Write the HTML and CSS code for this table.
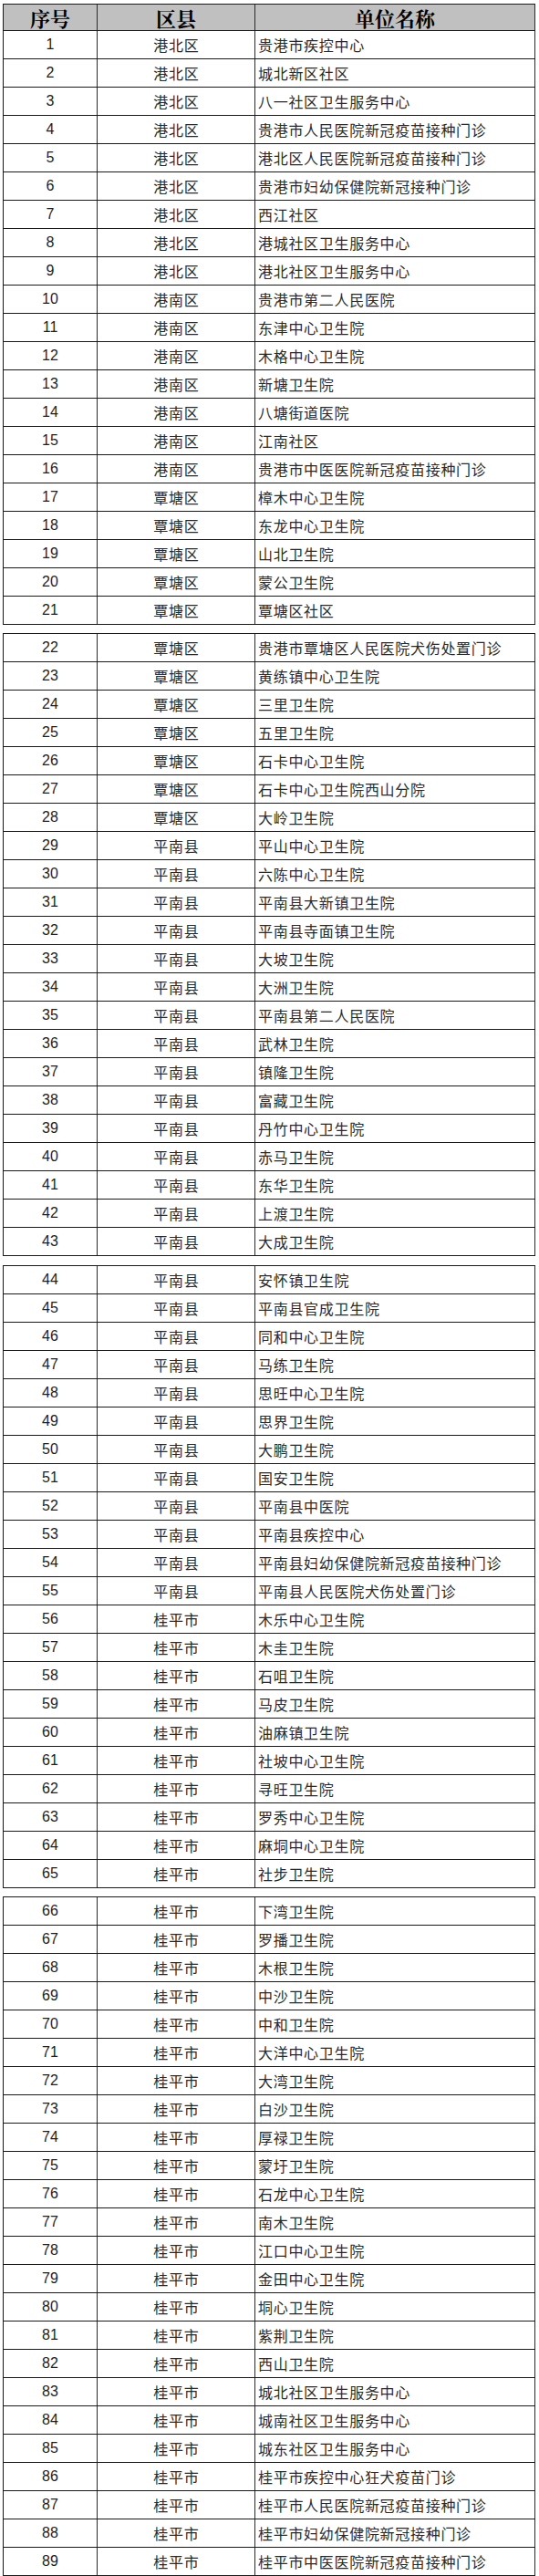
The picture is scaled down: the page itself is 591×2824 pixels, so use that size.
FILE: index.html
```html
<!DOCTYPE html>
<html lang="zh-CN">
<head>
<meta charset="utf-8">
<title>接种单位名单</title>
<link rel="stylesheet" href="styles.css">
</head>
<body>
<div class="page">
  <div class="seg">
    <div class="row head"><span class="no">序号</span><span class="area">区县</span><span class="name">单位名称</span></div>
    <div class="row"><span class="no">1</span><span class="area">港北区</span><span class="name">贵港市疾控中心</span></div>
    <div class="row"><span class="no">2</span><span class="area">港北区</span><span class="name">城北新区社区</span></div>
    <div class="row"><span class="no">3</span><span class="area">港北区</span><span class="name">八一社区卫生服务中心</span></div>
    <div class="row"><span class="no">4</span><span class="area">港北区</span><span class="name">贵港市人民医院新冠疫苗接种门诊</span></div>
    <div class="row"><span class="no">5</span><span class="area">港北区</span><span class="name">港北区人民医院新冠疫苗接种门诊</span></div>
    <div class="row"><span class="no">6</span><span class="area">港北区</span><span class="name">贵港市妇幼保健院新冠接种门诊</span></div>
    <div class="row"><span class="no">7</span><span class="area">港北区</span><span class="name">西江社区</span></div>
    <div class="row"><span class="no">8</span><span class="area">港北区</span><span class="name">港城社区卫生服务中心</span></div>
    <div class="row"><span class="no">9</span><span class="area">港北区</span><span class="name">港北社区卫生服务中心</span></div>
    <div class="row"><span class="no">10</span><span class="area">港南区</span><span class="name">贵港市第二人民医院</span></div>
    <div class="row"><span class="no">11</span><span class="area">港南区</span><span class="name">东津中心卫生院</span></div>
    <div class="row"><span class="no">12</span><span class="area">港南区</span><span class="name">木格中心卫生院</span></div>
    <div class="row"><span class="no">13</span><span class="area">港南区</span><span class="name">新塘卫生院</span></div>
    <div class="row"><span class="no">14</span><span class="area">港南区</span><span class="name">八塘街道医院</span></div>
    <div class="row"><span class="no">15</span><span class="area">港南区</span><span class="name">江南社区</span></div>
    <div class="row"><span class="no">16</span><span class="area">港南区</span><span class="name">贵港市中医医院新冠疫苗接种门诊</span></div>
    <div class="row"><span class="no">17</span><span class="area">覃塘区</span><span class="name">樟木中心卫生院</span></div>
    <div class="row"><span class="no">18</span><span class="area">覃塘区</span><span class="name">东龙中心卫生院</span></div>
    <div class="row"><span class="no">19</span><span class="area">覃塘区</span><span class="name">山北卫生院</span></div>
    <div class="row"><span class="no">20</span><span class="area">覃塘区</span><span class="name">蒙公卫生院</span></div>
    <div class="row"><span class="no">21</span><span class="area">覃塘区</span><span class="name">覃塘区社区</span></div>
  </div>
  <div class="seg seg-2">
    <div class="row"><span class="no">22</span><span class="area">覃塘区</span><span class="name">贵港市覃塘区人民医院犬伤处置门诊</span></div>
    <div class="row"><span class="no">23</span><span class="area">覃塘区</span><span class="name">黄练镇中心卫生院</span></div>
    <div class="row"><span class="no">24</span><span class="area">覃塘区</span><span class="name">三里卫生院</span></div>
    <div class="row"><span class="no">25</span><span class="area">覃塘区</span><span class="name">五里卫生院</span></div>
    <div class="row"><span class="no">26</span><span class="area">覃塘区</span><span class="name">石卡中心卫生院</span></div>
    <div class="row"><span class="no">27</span><span class="area">覃塘区</span><span class="name">石卡中心卫生院西山分院</span></div>
    <div class="row"><span class="no">28</span><span class="area">覃塘区</span><span class="name">大岭卫生院</span></div>
    <div class="row"><span class="no">29</span><span class="area">平南县</span><span class="name">平山中心卫生院</span></div>
    <div class="row"><span class="no">30</span><span class="area">平南县</span><span class="name">六陈中心卫生院</span></div>
    <div class="row"><span class="no">31</span><span class="area">平南县</span><span class="name">平南县大新镇卫生院</span></div>
    <div class="row"><span class="no">32</span><span class="area">平南县</span><span class="name">平南县寺面镇卫生院</span></div>
    <div class="row"><span class="no">33</span><span class="area">平南县</span><span class="name">大坡卫生院</span></div>
    <div class="row"><span class="no">34</span><span class="area">平南县</span><span class="name">大洲卫生院</span></div>
    <div class="row"><span class="no">35</span><span class="area">平南县</span><span class="name">平南县第二人民医院</span></div>
    <div class="row"><span class="no">36</span><span class="area">平南县</span><span class="name">武林卫生院</span></div>
    <div class="row"><span class="no">37</span><span class="area">平南县</span><span class="name">镇隆卫生院</span></div>
    <div class="row"><span class="no">38</span><span class="area">平南县</span><span class="name">富藏卫生院</span></div>
    <div class="row"><span class="no">39</span><span class="area">平南县</span><span class="name">丹竹中心卫生院</span></div>
    <div class="row"><span class="no">40</span><span class="area">平南县</span><span class="name">赤马卫生院</span></div>
    <div class="row"><span class="no">41</span><span class="area">平南县</span><span class="name">东华卫生院</span></div>
    <div class="row"><span class="no">42</span><span class="area">平南县</span><span class="name">上渡卫生院</span></div>
    <div class="row"><span class="no">43</span><span class="area">平南县</span><span class="name">大成卫生院</span></div>
  </div>
  <div class="seg seg-3">
    <div class="row"><span class="no">44</span><span class="area">平南县</span><span class="name">安怀镇卫生院</span></div>
    <div class="row"><span class="no">45</span><span class="area">平南县</span><span class="name">平南县官成卫生院</span></div>
    <div class="row"><span class="no">46</span><span class="area">平南县</span><span class="name">同和中心卫生院</span></div>
    <div class="row"><span class="no">47</span><span class="area">平南县</span><span class="name">马练卫生院</span></div>
    <div class="row"><span class="no">48</span><span class="area">平南县</span><span class="name">思旺中心卫生院</span></div>
    <div class="row"><span class="no">49</span><span class="area">平南县</span><span class="name">思界卫生院</span></div>
    <div class="row"><span class="no">50</span><span class="area">平南县</span><span class="name">大鹏卫生院</span></div>
    <div class="row"><span class="no">51</span><span class="area">平南县</span><span class="name">国安卫生院</span></div>
    <div class="row"><span class="no">52</span><span class="area">平南县</span><span class="name">平南县中医院</span></div>
    <div class="row"><span class="no">53</span><span class="area">平南县</span><span class="name">平南县疾控中心</span></div>
    <div class="row"><span class="no">54</span><span class="area">平南县</span><span class="name">平南县妇幼保健院新冠疫苗接种门诊</span></div>
    <div class="row"><span class="no">55</span><span class="area">平南县</span><span class="name">平南县人民医院犬伤处置门诊</span></div>
    <div class="row"><span class="no">56</span><span class="area">桂平市</span><span class="name">木乐中心卫生院</span></div>
    <div class="row"><span class="no">57</span><span class="area">桂平市</span><span class="name">木圭卫生院</span></div>
    <div class="row"><span class="no">58</span><span class="area">桂平市</span><span class="name">石咀卫生院</span></div>
    <div class="row"><span class="no">59</span><span class="area">桂平市</span><span class="name">马皮卫生院</span></div>
    <div class="row"><span class="no">60</span><span class="area">桂平市</span><span class="name">油麻镇卫生院</span></div>
    <div class="row"><span class="no">61</span><span class="area">桂平市</span><span class="name">社坡中心卫生院</span></div>
    <div class="row"><span class="no">62</span><span class="area">桂平市</span><span class="name">寻旺卫生院</span></div>
    <div class="row"><span class="no">63</span><span class="area">桂平市</span><span class="name">罗秀中心卫生院</span></div>
    <div class="row"><span class="no">64</span><span class="area">桂平市</span><span class="name">麻垌中心卫生院</span></div>
    <div class="row"><span class="no">65</span><span class="area">桂平市</span><span class="name">社步卫生院</span></div>
  </div>
  <div class="seg seg-4">
    <div class="row"><span class="no">66</span><span class="area">桂平市</span><span class="name">下湾卫生院</span></div>
    <div class="row"><span class="no">67</span><span class="area">桂平市</span><span class="name">罗播卫生院</span></div>
    <div class="row"><span class="no">68</span><span class="area">桂平市</span><span class="name">木根卫生院</span></div>
    <div class="row"><span class="no">69</span><span class="area">桂平市</span><span class="name">中沙卫生院</span></div>
    <div class="row"><span class="no">70</span><span class="area">桂平市</span><span class="name">中和卫生院</span></div>
    <div class="row"><span class="no">71</span><span class="area">桂平市</span><span class="name">大洋中心卫生院</span></div>
    <div class="row"><span class="no">72</span><span class="area">桂平市</span><span class="name">大湾卫生院</span></div>
    <div class="row"><span class="no">73</span><span class="area">桂平市</span><span class="name">白沙卫生院</span></div>
    <div class="row"><span class="no">74</span><span class="area">桂平市</span><span class="name">厚禄卫生院</span></div>
    <div class="row"><span class="no">75</span><span class="area">桂平市</span><span class="name">蒙圩卫生院</span></div>
    <div class="row"><span class="no">76</span><span class="area">桂平市</span><span class="name">石龙中心卫生院</span></div>
    <div class="row"><span class="no">77</span><span class="area">桂平市</span><span class="name">南木卫生院</span></div>
    <div class="row"><span class="no">78</span><span class="area">桂平市</span><span class="name">江口中心卫生院</span></div>
    <div class="row"><span class="no">79</span><span class="area">桂平市</span><span class="name">金田中心卫生院</span></div>
    <div class="row"><span class="no">80</span><span class="area">桂平市</span><span class="name">垌心卫生院</span></div>
    <div class="row"><span class="no">81</span><span class="area">桂平市</span><span class="name">紫荆卫生院</span></div>
    <div class="row"><span class="no">82</span><span class="area">桂平市</span><span class="name">西山卫生院</span></div>
    <div class="row"><span class="no">83</span><span class="area">桂平市</span><span class="name">城北社区卫生服务中心</span></div>
    <div class="row"><span class="no">84</span><span class="area">桂平市</span><span class="name">城南社区卫生服务中心</span></div>
    <div class="row"><span class="no">85</span><span class="area">桂平市</span><span class="name">城东社区卫生服务中心</span></div>
    <div class="row"><span class="no">86</span><span class="area">桂平市</span><span class="name">桂平市疾控中心狂犬疫苗门诊</span></div>
    <div class="row"><span class="no">87</span><span class="area">桂平市</span><span class="name">桂平市人民医院新冠疫苗接种门诊</span></div>
    <div class="row"><span class="no">88</span><span class="area">桂平市</span><span class="name">桂平市妇幼保健院新冠接种门诊</span></div>
    <div class="row"><span class="no">89</span><span class="area">桂平市</span><span class="name">桂平市中医医院新冠疫苗接种门诊</span></div>
  </div>
</div>
</body>
</html>
```

FILE: styles.css
```css
* { box-sizing: border-box; }
html, body { margin: 0; padding: 0; background: #fff; }
body {
  font-family: "Liberation Sans", "Noto Sans CJK SC", sans-serif;
  color: #222;
}
.page {
  padding: 4px 0 0 3px;
}
.seg {
  width: 584px;
  border-top: 1px solid #1a1a1a;
  border-left: 1px solid #1a1a1a;
}
.seg-2 { margin-top: 9px; }
.seg-3 { margin-top: 10px; }
.seg-4 { margin-top: 9px; }
.row {
  display: grid;
  grid-template-columns: 103px 173px 307px;
  height: 31px;
  border-bottom: 1px solid #1a1a1a;
}
.row > span {
  display: flex;
  align-items: center;
  border-right: 1px solid #2a2a2a;
  font-size: 16px;
  white-space: nowrap;
  overflow: hidden;
}
.no {
  justify-content: center;
  font-family: "Liberation Sans", Arial, sans-serif;
  color: #1e1e1e;
}
.area {
  justify-content: center;
  font-family: "Noto Sans CJK SC", sans-serif;
  font-weight: 400;
  letter-spacing: 0.8px;
  color: #2a2a2a;
  padding-left: 0.8px;
}
.name {
  justify-content: flex-start;
  padding-left: 3px;
  font-family: "Noto Sans CJK SC", sans-serif;
  letter-spacing: 0.7px;
  color: #2a2a2a;
}
.row.head {
  height: 29px;
  background: #c0c0c0;
}
.row.head > span {
  justify-content: center;
  padding-left: 0;
  font-family: "Noto Serif CJK SC", "Noto Sans CJK SC", serif;
  font-weight: 700;
  font-size: 22px;
  letter-spacing: 0;
  color: #000;
}
```
